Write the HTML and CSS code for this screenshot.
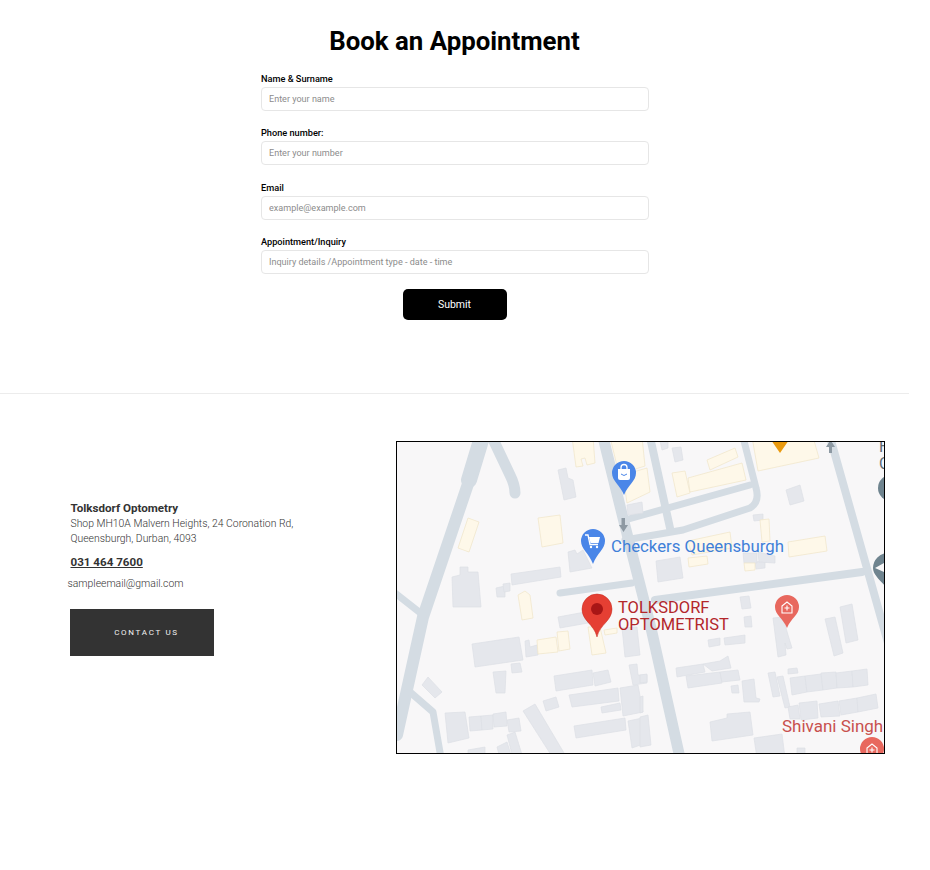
FILE: index.html
```html
<!DOCTYPE html>
<html lang="en">
<head>
<meta charset="utf-8">
<title>Book an Appointment</title>
<link rel="stylesheet" href="styles.css">
</head>
<body>
<div class="page">
  <section class="booking">
    <h1 class="title">Book an Appointment</h1>
    <form class="form">
      <div class="field"><label class="label">Name &amp; Surname</label><input class="input" placeholder="Enter your name"></div>
      <div class="field"><label class="label">Phone number:</label><input class="input" placeholder="Enter your number"></div>
      <div class="field"><label class="label">Email</label><input class="input" placeholder="example@example.com"></div>
      <div class="field"><label class="label">Appointment/Inquiry</label><input class="input" placeholder="Inquiry details /Appointment type - date - time"></div>
      <button class="submit" type="button">Submit</button>
    </form>
  </section>
  <section class="contact">
    <div class="info">
      <div class="name">Tolksdorf Optometry</div>
      <div class="address">Shop MH10A Malvern Heights, 24 Coronation Rd,<br>Queensburgh, Durban, 4093</div>
      <a class="phone">031 464 7600</a>
      <div class="email">sampleemail@gmail.com</div>
      <a class="cta">CONTACT US</a>
    </div>
    <div class="map">
      <svg class="map-svg" viewBox="397 442 487 311" width="487" height="311">
        <g class="roads">
          <path class="r16" d="M482 437L469 480"/>
          <path class="r10" d="M470 478L423 617L397 735"/>
          <path class="r12" d="M492 437L510 475Q515 485 515 493"/>
          <path class="r8" d="M395 593L423 615"/>
          <path class="r8" d="M410 692L433 712L441 758"/>
          <path class="r11" d="M603 437L623 518L651 628L680 758"/>
          <path class="r9" d="M650 437L670 528"/>
          <path class="r8" d="M743 437L756 488Q760 502 750 508L683 530L625 540"/>
          <path class="r8" d="M625 520L750 485"/>
          <path class="r8" d="M560 593L632 583"/>
          <path class="r9" d="M655 600L862 572"/>
          <path class="r9" d="M830 437L890 650"/>
        </g>
        <g class="bld">
          <polygon points="558,470 566,468 568,478 573,480 576,497 564,500"/>
          <polygon points="568,552 575,550 577,554 583,550 592,568 570,572"/>
          <polygon points="511,574 560,567 561,577 512,585"/>
          <polygon points="452,577 460,575 460,567 468,567 468,572 478,572 481,607 453,607"/>
          <polygon points="496,588 505,586 505,597 497,597"/>
          <polygon points="503,584 510,583 510,591 504,592"/>
          <polygon points="627,505 642,502 643,513 628,515"/>
          <polygon points="660,441 668,441 668,448 662,450"/>
          <polygon points="672,448 681,447 683,460 675,462"/>
          <polygon points="786,490 800,485 804,501 790,505"/>
          <polygon points="753,515 763,514 763,520 754,521"/>
          <polygon points="656,561 680,557 683,578 658,582"/>
          <polygon points="755,562 765,561 765,568 756,569"/>
          <polygon points="743,553 757,553 757,563 744,563"/>
          <polygon points="758,552 775,556 775,563 759,562"/>
          <polygon points="558,617 585,612 588,623 560,628"/>
          <polygon points="525,641 529,640 530,647 537,645 538,655 526,657"/>
          <polygon points="472,644 519,637 523,660 475,667"/>
          <polygon points="511,664 520,663 522,672 512,673"/>
          <polygon points="493,672 506,671 505,693 496,693"/>
          <polygon points="422,685 428,677 442,692 435,698"/>
          <polygon points="554,676 592,670 593,685 556,691"/>
          <polygon points="593,673 608,670 611,682 595,686"/>
          <polygon points="569,695 618,688 619,701 572,707"/>
          <polygon points="543,701 556,697 559,707 546,711"/>
          <polygon points="601,707 620,703 621,710 602,713"/>
          <polygon points="620,688 638,685 643,712 623,716"/>
          <polygon points="574,726 625,718 626,730 576,738"/>
          <polygon points="628,721 647,717 649,742 632,748"/>
          <polygon points="523,711 535,704 567,758 553,758"/>
          <polygon points="445,713 465,712 469,738 448,743"/>
          <polygon points="469,717 481,716 482,730 470,731"/>
          <polygon points="481,716 493,715 493,729 482,730"/>
          <polygon points="493,714 506,712 507,726 494,727"/>
          <polygon points="507,720 519,718 521,731 509,732"/>
          <polygon points="507,735 515,732 523,758 513,758"/>
          <polygon points="497,747 507,742 512,758 500,758"/>
          <polygon points="468,750 485,747 485,758 468,758"/>
          <polygon points="622,628 637,627 640,655 625,657"/>
          <polygon points="629,665 637,664 638,675 647,675 647,683 633,685"/>
          <polygon points="773,618 783,617 788,635 792,648 787,649 785,643 786,655 778,657"/>
          <polygon points="825,619 835,617 843,653 834,656"/>
          <polygon points="840,607 852,604 858,640 846,643"/>
          <polygon points="740,597 749,596 751,608 742,609"/>
          <polygon points="744,617 751,616 752,627 745,627"/>
          <polygon points="708,640 720,638 720,645 709,647"/>
          <polygon points="724,638 745,635 745,643 725,645"/>
          <polygon points="676,668 703,664 705,672 677,677"/>
          <polygon points="703,664 720,661 728,656 731,668 712,671"/>
          <polygon points="686,676 720,672 722,683 688,688"/>
          <polygon points="720,672 738,670 740,680 722,682"/>
          <polygon points="731,686 738,685 739,693 732,693"/>
          <polygon points="742,681 754,679 756,698 760,699 759,702 744,702"/>
          <polygon points="768,673 775,672 780,696 773,697"/>
          <polygon points="777,677 783,676 790,707 785,708"/>
          <polygon points="788,669 797,668 798,673 788,674"/>
          <polygon points="790,678 805,676 807,692 792,695"/>
          <polygon points="805,676 821,674 823,690 807,692"/>
          <polygon points="821,673 836,672 837,688 823,690"/>
          <polygon points="836,673 852,671 853,687 837,688"/>
          <polygon points="852,671 867,669 868,685 853,687"/>
          <polygon points="788,707 798,705 800,719 790,719"/>
          <polygon points="799,703 817,701 818,718 801,720"/>
          <polygon points="819,704 838,701 840,716 821,717"/>
          <polygon points="839,701 857,698 858,712 841,715"/>
          <polygon points="857,698 876,694 878,708 858,712"/>
          <polygon points="710,722 727,718 727,714 750,712 753,735 712,741"/>
          <polygon points="754,738 782,734 785,758 757,758"/>
          <polygon points="797,748 805,748 805,758 797,758"/>
          <polygon points="640,675 647,674 647,682 640,683"/>
          <polygon points="640,717 648,715 651,745 640,747"/>
          <polygon points="640,697 643,696 643,712 640,713"/>
        </g>
        <g class="yel">
          <polygon points="572,437 593,437 595,463 587,465 585,458 581,459 583,466 576,467"/>
          <polygon points="468,518 479,522 469,552 458,548"/>
          <polygon points="538,518 560,515 563,543 542,547"/>
          <polygon points="518,595 525,591 530,595 533,618 522,620"/>
          <polygon points="610,437 642,437 645,466 619,474"/>
          <polygon points="623,475 647,468 650,492 627,503"/>
          <polygon points="707,460 735,448 738,457 710,470"/>
          <polygon points="672,473 685,471 690,493 677,497"/>
          <polygon points="688,478 742,463 746,480 690,492"/>
          <polygon points="752,437 813,437 819,458 758,471"/>
          <polygon points="760,520 769,519 770,541 762,542"/>
          <polygon points="788,542 825,536 827,551 789,557"/>
          <polygon points="688,541 730,532 732,548 692,555"/>
          <polygon points="688,558 707,556 708,564 689,567"/>
          <polygon points="744,563 755,563 755,570 745,571"/>
          <polygon points="588,627 600,627 606,653 592,655"/>
          <polygon points="537,640 556,637 558,652 538,654"/>
          <polygon points="557,632 568,631 570,649 559,651"/>
          <polygon points="604,630 617,628 617,633 605,635"/>
        </g>
        <path class="arrow" d="M621.500 518h3.500v7h3l-4.500 7-4.500-7h2.500z"/>
        <path class="arrow" d="M829 453v-6h-3l4.500-7 4.500 7h-3v6z"/>
        <polygon class="pin-orange" points="769,437 791,437 780,453"/>
        <circle class="pin-slate" cx="891" cy="488" r="13"/>
        <path class="pin-slate" d="M888 553a15 15 0 0 1 15 15c0 8-10 14-15 22c-5-8-15-14-15-22a15 15 0 0 1 15-15z"/>
        <path class="hat" d="M875 568l9-5 8 4-8 5z"/>
        <path class="pin-blue" d="M624 461a12 12 0 0 1 12 12c0 8-8 12-12 22c-4-10-12-14-12-22a12 12 0 0 1 12-12z"/>
        <path class="icon-white" d="M618 469h12v9a2 2 0 0 1-2 2h-8a2 2 0 0 1-2-2z"/>
        <path class="icon-stroke" d="M621 469v-1.500a3 3 0 0 1 6 0v1.500"/>
        <path class="icon-blue-line" d="M621 474q3 3 6 0"/>
        <path class="pin-blue" d="M593 529a12 12 0 0 1 12 12c0 8-8 12-12 23c-4-11-12-15-12-23a12 12 0 0 1 12-12z"/>
        <path class="icon-white" d="M589 537h11l-1.500 6h-8z"/>
        <path class="icon-stroke" d="M585 535h3l2 9.500h8"/>
        <circle class="icon-white" cx="591" cy="547" r="1.200"/>
        <circle class="icon-white" cx="597" cy="547" r="1.200"/>
        <path class="pin-med" d="M787 595a12 12 0 0 1 12 12c0 8-8 11-12 21c-4-10-12-13-12-21a12 12 0 0 1 12-12z"/>
        <path class="icon-stroke-thin" d="M782 606l5-4 5 4v7h-10zM787 605.500v5M784.500 608h5"/>
        <path class="pin-med" d="M872 737a12 12 0 0 1 12 12c0 8-8 11-12 21c-4-10-12-13-12-21a12 12 0 0 1 12-12z"/>
        <path class="icon-stroke-thin" d="M867 748l5-4 5 4v7h-10zM872 747.500v5M869.500 750h5"/>
        <path class="pin-red" d="M597 594a15 15 0 0 1 15 15c0 12-12 15-15 28c-3-13-15-16-15-28a15 15 0 0 1 15-15z"/>
        <circle class="pin-red-dot" cx="597" cy="609" r="6"/>
        <text class="label-blue" x="611" y="552">Checkers Queensburgh</text>
        <text class="label-red" x="618" y="613">TOLKSDORF</text>
        <text class="label-red" x="618" y="630">OPTOMETRIST</text>
        <text class="label-pink" x="782" y="732">Shivani Singh</text>
        <text class="label-slate" x="879" y="452">H</text>
        <text class="label-slate" x="879" y="469">C</text>
      </svg>
    </div>
  </section>
</div>
</body>
</html>
```
FILE: styles.css
```css
* { box-sizing: border-box; }
html, body { margin: 0; padding: 0; background: #fff; }
body { font-family: Roboto, "Liberation Sans", sans-serif; color: #000; }
.page { width: 909px; height: 870px; }

.booking {
  height: 394px;
  padding-top: 26px;
  border-bottom: 1px solid #ececec;
  display: flex;
  flex-direction: column;
  align-items: center;
}
.title {
  margin: 0 0 16px;
  font-size: 25.800px;
  line-height: 30px;
  font-weight: 700;
  text-align: center;
}
.form { width: 388px; display: flex; flex-direction: column; }
.field { display: flex; flex-direction: column; margin-bottom: 15.400px; }
.label {
  font-size: 9.200px;
  line-height: 11px;
  font-weight: 500;
  padding: 1px 0 0 0.500px;
  margin-bottom: 3px;
  height: 12px;
}
.input {
  height: 24px;
  width: 100%;
  border: 1px solid #e6e6e6;
  border-radius: 4px;
  padding: 0 7.500px;
  font: 400 9.050px Roboto, sans-serif;
  background: #fff;
  outline: none;
}
.input::placeholder { color: #8c8c8c; opacity: 1; }
.submit {
  align-self: center;
  width: 104px;
  height: 31px;
  margin-top: -1px;
  border: 0;
  border-radius: 5px;
  background: #000;
  color: #fff;
  font: 400 10.500px Roboto, sans-serif;
}

.contact {
  display: flex;
  padding-top: 47px;
}
.info {
  width: 396px;
  padding: 60px 0 0 70.500px;
  display: flex;
  flex-direction: column;
  align-items: flex-start;
  color: #333;
}
.name { font-size: 11.600px; line-height: 15px; font-weight: 700; }
.address { font-size: 10.400px; line-height: 15px; font-weight: 300; }
.phone {
  margin-top: 9px;
  font-size: 11.600px;
  line-height: 15px;
  font-weight: 700;
  text-decoration: underline;
}
.email {
  margin: 7px 0 0 -3px;
  font-size: 10.400px;
  line-height: 14px;
  font-weight: 300;
}
.cta {
  margin: 18px 0 0 -0.500px;
  width: 144px;
  height: 47px;
  padding-left: 9px;
  background: #333;
  color: #f2f2f2;
  font-size: 8px;
  font-weight: 400;
  letter-spacing: 1.700px;
  display: flex;
  align-items: center;
  justify-content: center;
}

.map {
  width: 489px;
  height: 313px;
  border: 1px solid #000;
  background: #f8f7f8;
  overflow: hidden;
  flex: none;
}
.map-svg { display: block; }
.roads path { fill: none; stroke: #d4dce3; stroke-linecap: round; stroke-linejoin: round; }
.r16 { stroke-width: 16; }
.r12 { stroke-width: 11; }
.r11 { stroke-width: 11; }
.r10 { stroke-width: 12; }
.r9 { stroke-width: 8; }
.r8 { stroke-width: 7; }
.bld polygon { fill: #e5e7ec; stroke: #dcdfe5; stroke-width: 0.700; }
.yel polygon { fill: #fef8e9; stroke: #f1e7cd; stroke-width: 0.800; }
.arrow { fill: #8d99a3; }
.pin-orange { fill: #ea9a0e; }
.pin-slate { fill: #6f848f; }
.hat { fill: #f8f7f8; }
.pin-blue { fill: #4a86e8; }
.pin-med { fill: #e8685e; }
.pin-red { fill: #e53f33; stroke: #c5281f; stroke-width: 0.500; }
.pin-red-dot { fill: #a81616; }
.icon-white { fill: #fff; }
.icon-stroke { fill: none; stroke: #fff; stroke-width: 1.300; }
.icon-stroke-thin { fill: none; stroke: #fff; stroke-width: 1.100; }
.icon-blue-line { fill: none; stroke: #4a86e8; stroke-width: 1; }
.label-blue { fill: #3f80d8; font: 400 16.800px Roboto, sans-serif; }
.label-red { fill: #b3272b; font: 400 16.500px Roboto, sans-serif; }
.label-pink { fill: #c8504e; font: 400 17px Roboto, sans-serif; }
.label-slate { fill: #5d6b73; font: 400 16px Roboto, sans-serif; }
```
